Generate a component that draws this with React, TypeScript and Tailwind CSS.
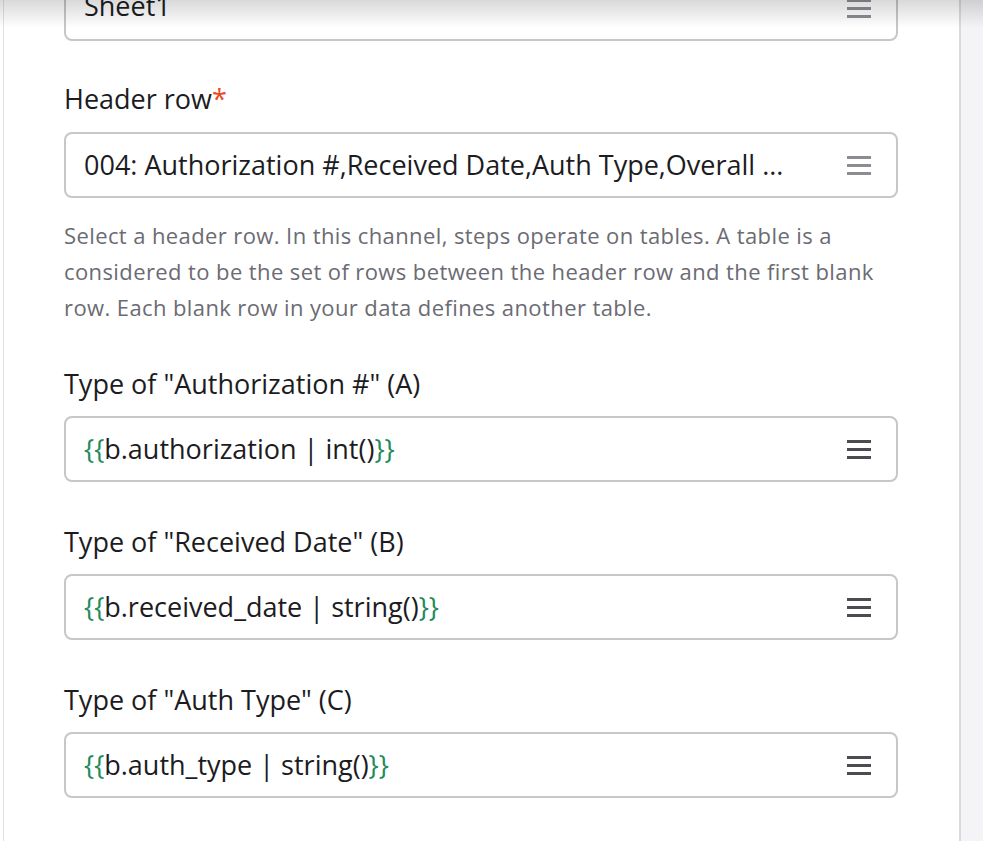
import React from "react";

const Burger = ({ dark }: { dark?: boolean }) => (
  <div className="flex flex-col gap-[5px] w-[24px] shrink-0">
    <div className={`h-[3px] w-full ${dark ? "bg-[#4b4b52]" : "bg-[#8c8c93]"}`} />
    <div className={`h-[3px] w-full ${dark ? "bg-[#4b4b52]" : "bg-[#8c8c93]"}`} />
    <div className={`h-[3px] w-full ${dark ? "bg-[#4b4b52]" : "bg-[#8c8c93]"}`} />
  </div>
);

const Field = ({ children, dark, extra }: { children: React.ReactNode; dark?: boolean; extra?: string }) => (
  <div className={`h-[66px] w-[834px] rounded-[8px] border-2 border-[#c6c6cb] bg-white flex items-center pl-[18px] pr-[25px] ${extra ?? ""}`}>
    <div className="flex-1 text-[27px] text-[#1c1c1f] whitespace-nowrap overflow-hidden">{children}</div>
    <Burger dark={dark} />
  </div>
);

const Label = ({ children, mb }: { children: React.ReactNode; mb: string }) => (
  <div className={`text-[27px] leading-[32px] text-[#1c1c1f] ${mb}`}>{children}</div>
);

const Tmpl = ({ body }: { body: string }) => (
  <span>
    <span className="text-[#238a5c]">{"{{"}</span>
    {body}
    <span className="text-[#238a5c]">{"}}"}</span>
  </span>
);

export default function App() {
  return (
    <div className="relative w-[983px] h-[841px] overflow-hidden bg-white flex" style={{ fontFamily: "'Open Sans', 'Noto Sans', sans-serif" }}>
      <div className="w-[959px] h-full flex">
        <div className="ml-[3px] w-px h-full bg-[#e2e2e5]" />
        <div className="pl-[60px] flex flex-col">
          <Field dark={false} extra="-mt-[25px]">
            <span className="relative -top-[2px]">Sheet1</span>
          </Field>
          <div className="mt-[42px]">
            <Label mb="mb-[17px]">
              Header row<span className="text-[#e8491d]">*</span>
            </Label>
            <Field>004: Authorization #,Received Date,Auth Type,Overall ...</Field>
          </div>
          <div className="mt-[19px] w-[880px] text-[22px] leading-[36px] tracking-[0.4px] text-[#6b6b73]">
            Select a header row. In this channel, steps operate on tables. A table is a
            <br />
            considered to be the set of rows between the header row and the first blank
            <br />
            row. Each blank row in your data defines another table.
          </div>
          <div className="mt-[43px]">
            <Label mb="mb-[16px]">Type of "Authorization #" (A)</Label>
            <Field dark>
              <Tmpl body="b.authorization | int()" />
            </Field>
          </div>
          <div className="mt-[44px]">
            <Label mb="mb-[16px]">Type of "Received Date" (B)</Label>
            <Field dark>
              <Tmpl body="b.received_date | string()" />
            </Field>
          </div>
          <div className="mt-[44px]">
            <Label mb="mb-[16px]">Type of "Auth Type" (C)</Label>
            <Field dark>
              <Tmpl body="b.auth_type | string()" />
            </Field>
          </div>
        </div>
      </div>
      <div className="w-[2px] h-full bg-[#d9d9dd]" />
      <div className="flex-1 h-full bg-[#f4f4f7]" />
      <div className="absolute top-0 left-0 right-0 h-[28px] bg-gradient-to-b from-black/15 to-transparent pointer-events-none" />
    </div>
  );
}
